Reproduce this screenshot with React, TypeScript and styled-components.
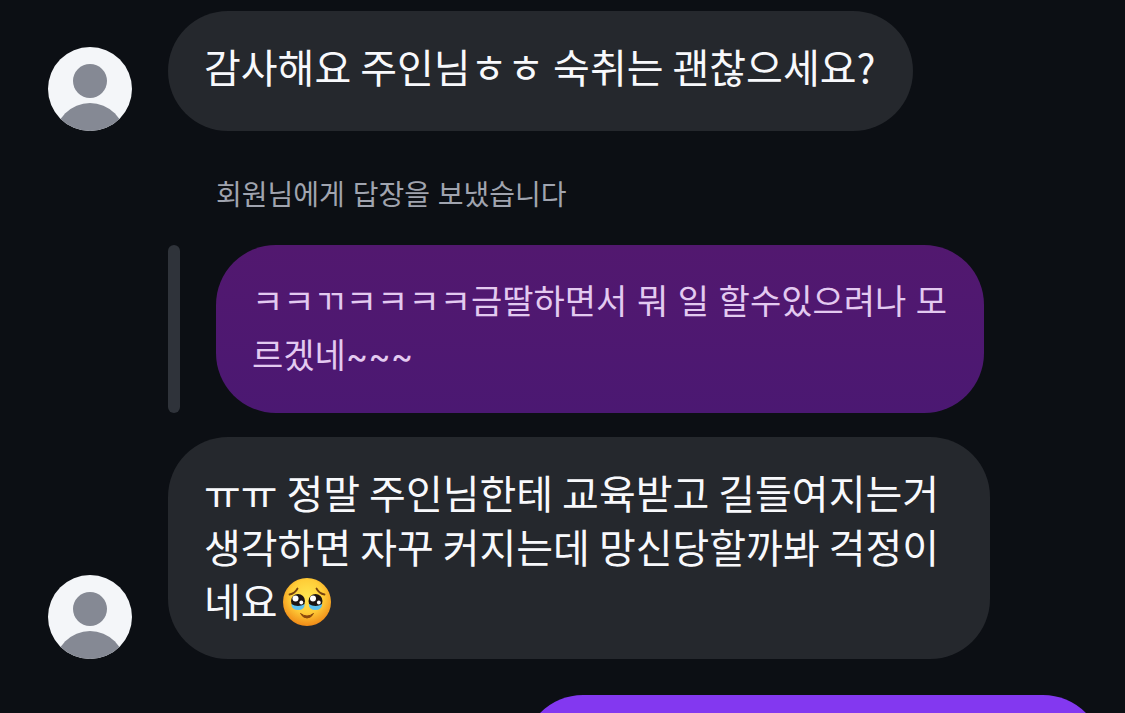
import React from "react";
import styled, { createGlobalStyle } from "styled-components";

const GlobalStyle = createGlobalStyle`
  *, *::before, *::after { box-sizing: border-box; }
  body { margin: 0; background: #0c0f14; }
`;

const Thread = styled.main`
  display: flex;
  flex-direction: column;
  height: 100vh;
  overflow: hidden;
  padding: 11px 22px 0 48px;
  background: #0c0f14;
  color: #f8f9fc;
  font-family: Inter, "Noto Sans CJK KR", sans-serif;
`;

const MessageRow = styled.article`
  display: flex;
  flex-shrink: 0;
  align-items: flex-end;
  gap: 36px;
`;

const AvatarImage = styled.svg`
  flex: none;
  width: 84px;
  height: 84px;
  border-radius: 50%;
`;

const Bubble = styled.p`
  margin: 0;
  max-width: 822px;
  min-height: 120px;
  padding: 28px 38px 32px 36px;
  border-radius: 60px;
  background: #25282d;
  font-family: "Noto Sans CJK KR", sans-serif;
  font-size: 40px;
  line-height: 54px;
`;

const Reply = styled.section`
  flex-shrink: 0;
  margin: 42px 0 24px 120px;
`;

const ReplyLabel = styled.p`
  margin: 0;
  padding: 1px 0 29px 48px;
  color: #a0a4af;
  font-size: 28px;
  line-height: 42px;
`;

const Quote = styled.blockquote`
  display: flex;
  gap: 36px;
  margin: 0;
`;

const QuoteBar = styled.span`
  flex: none;
  width: 12px;
  border-radius: 6px;
  background: #2f333a;
`;

const QuoteBubble = styled(Bubble)`
  max-width: 768px;
  padding: 30px 36px;
  background: linear-gradient(#52186f, #4b1872);
  color: #e3caf0;
  font-family: Inter, "Noto Sans CJK KR", sans-serif;
  font-size: 34px;
`;

const SentBubble = styled.div`
  flex: none;
  align-self: flex-end;
  width: 55%;
  height: 120px;
  margin-top: 36px;
  border-radius: 60px;
  background: #8338f0;
`;

const EmojiImage = styled.svg`
  width: 50px;
  height: 50px;
  margin: 4px 0 0 4px;
  vertical-align: top;
`;

function Avatar() {
  return (
    <AvatarImage viewBox="0 0 84 84" role="img" aria-label="프로필">
      <rect width="84" height="84" fill="#f4f6f9" />
      <circle cx="42" cy="34" r="17" fill="#858994" />
      <circle cx="42" cy="91" r="35" fill="#858994" />
    </AvatarImage>
  );
}

function TearyEmoji() {
  return (
    <EmojiImage viewBox="0 0 50 50" role="img" aria-label="🥹">
      <defs>
        <radialGradient id="face" cx="50%" cy="38%" r="62%">
          <stop offset="0" stopColor="#ffe64f" />
          <stop offset="0.55" stopColor="#ffcd38" />
          <stop offset="1" stopColor="#f08a17" />
        </radialGradient>
      </defs>
      <circle cx="25" cy="25" r="24" fill="url(#face)" />
      <path d="M7.500 17.500Q13 16.500 15.500 11.500M34.500 11.500Q37 16.500 42.500 17.500" fill="none" stroke="#76420f" strokeWidth="1.800" strokeLinecap="round" />
      <circle cx="16" cy="24" r="7" fill="#1c1513" />
      <circle cx="33.500" cy="24" r="7" fill="#1c1513" />
      <path d="M9.200 27Q16 31 22.800 27Q22.500 33 16 33Q9.800 33 9.200 27Z" fill="#5cc0ee" />
      <path d="M26.700 27Q33.500 31 40.300 27Q39.700 33 33.500 33Q27 33 26.700 27Z" fill="#5cc0ee" />
      <circle cx="13.500" cy="21.500" r="3" fill="#fff" />
      <circle cx="31" cy="21.500" r="3" fill="#fff" />
      <circle cx="19.300" cy="25.500" r="1.900" fill="#fff" />
      <circle cx="36.800" cy="25.500" r="1.900" fill="#fff" />
      <path d="M18.500 36.500Q25 41.500 31.500 36.500Q29 41 25 41Q21 41 18.500 36.500Z" fill="#8a480d" stroke="#8a480d" strokeWidth="1" strokeLinejoin="round" />
    </EmojiImage>
  );
}

export default function App() {
  return (
    <>
      <GlobalStyle />
      <Thread>
        <MessageRow>
          <Avatar />
          <Bubble>감사해요 주인님ㅎㅎ 숙취는 괜찮으세요?</Bubble>
        </MessageRow>
        <Reply>
          <ReplyLabel>회원님에게 답장을 보냈습니다</ReplyLabel>
          <Quote>
            <QuoteBar />
            <QuoteBubble as="p">ㅋㅋㄲㅋㅋㅋㅋ금딸하면서 뭐 일 할수있으려나 모르겠네~~~</QuoteBubble>
          </Quote>
        </Reply>
        <MessageRow>
          <Avatar />
          <Bubble>
            ㅠㅠ 정말 주인님한테 교육받고 길들여지는거 생각하면 자꾸 커지는데 망신당할까봐 걱정이네요
            <TearyEmoji />
          </Bubble>
        </MessageRow>
        <SentBubble />
      </Thread>
    </>
  );
}
